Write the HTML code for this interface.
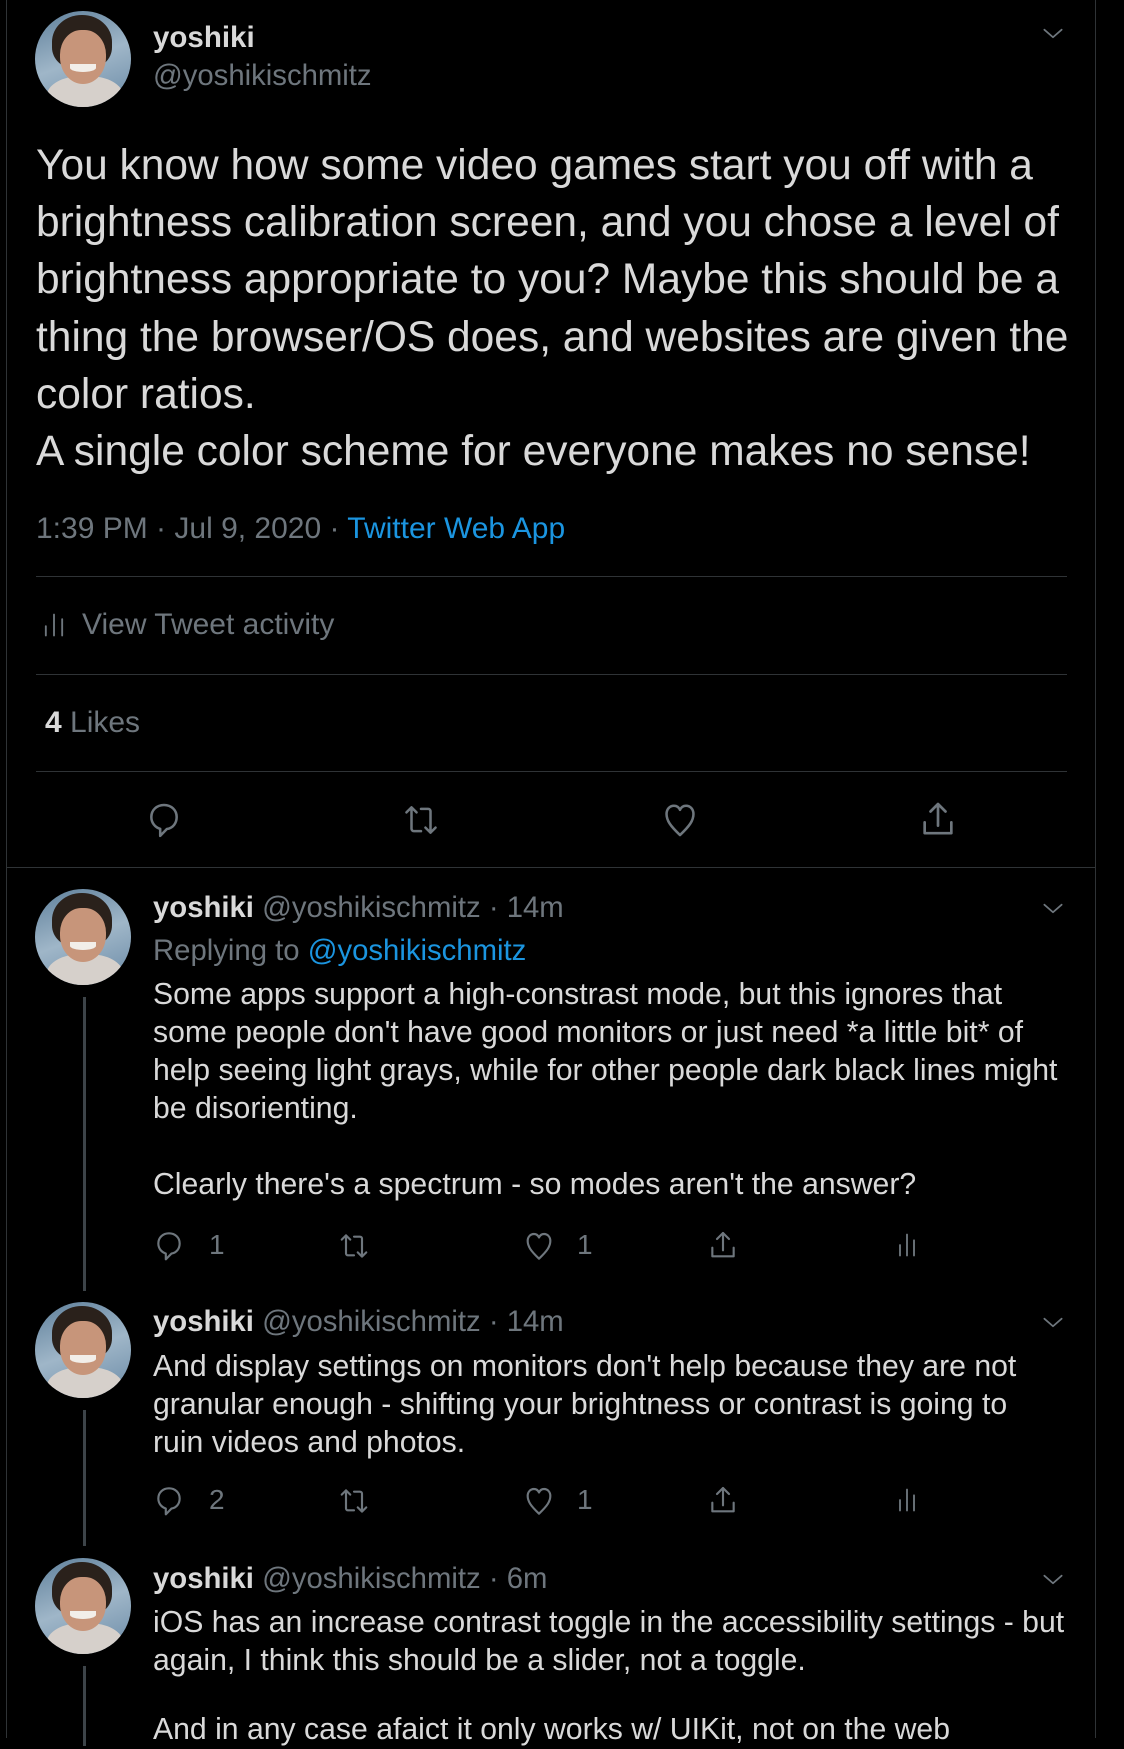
<!DOCTYPE html>
<html><head><meta charset="utf-8">
<style>
*{margin:0;padding:0;box-sizing:border-box}
body{width:1124px;height:1738px;background:#000;overflow:hidden;position:relative;font-family:"Liberation Sans",Arial,sans-serif;color:#d9d9d9}
.t{position:absolute;white-space:nowrap}
.g{color:#6e767d}
.b{color:#1b95e0}
.n{font-weight:bold;color:#d9d9d9}
.hr{position:absolute;height:1px;background:#2f3336}
.av{position:absolute;border-radius:50%;overflow:hidden;background:linear-gradient(160deg,#5e7f9a,#9fb6c8 50%,#6a8aa6)}
.av i{position:absolute;display:block}
.av .sc{left:12%;top:68%;width:80%;height:45%;background:#d6d0cb;border-radius:45%}
.av .hr2{left:18%;top:4%;width:62%;height:56%;background:#2a211b;border-radius:50% 50% 40% 40%}
.av .fc{left:26%;top:20%;width:48%;height:56%;background:#c7957a;border-radius:46% 46% 50% 50%}
.av .sm{left:36%;top:55%;width:28%;height:9%;background:#f2eee9;border-radius:0 0 50% 50%}
.line{position:absolute;left:83px;width:3px;background:#3d4449}
svg{position:absolute;fill:none;stroke:#6e767d;stroke-width:1.6;stroke-linecap:round;stroke-linejoin:round}
</style></head><body>
<svg width="0" height="0" style="position:absolute">
<defs>
<symbol id="rp" viewBox="0 0 24 24"><path d="M12 2.5c-4.6 0-8 3.2-8 7.6 0 3.6 2.3 6.6 5.6 7.5V22l4.2-4.3c4-.6 6.2-3.9 6.2-7.6 0-4.4-3.4-7.6-8-7.6z"/></symbol>
<symbol id="rt" viewBox="0 0 24 24"><path d="M6 4v13.5c0 .8.6 1.5 1.5 1.5H12M2.8 7.2L6 4l3.2 3.2M18 20V6.5c0-.8-.6-1.5-1.5-1.5H12M14.8 16.8L18 20l3.2-3.2"/></symbol>
<symbol id="ht" viewBox="0 0 24 24"><path d="M12 21.5C6 15.8 3.5 12.4 3.5 8.2 3.5 5.1 5.6 3 8.2 3c1.8 0 3.1 1 3.8 2.6C12.7 4 14 3 15.8 3c2.6 0 4.7 2.1 4.7 5.2 0 4.2-2.5 7.6-8.5 13.3z"/></symbol>
<symbol id="sh" viewBox="0 0 24 24"><path d="M12 3v13M7.5 7.5L12 3l4.5 4.5M4 14v6.5h16V14"/></symbol>
<symbol id="br" viewBox="0 0 24 24"><path d="M6 12v9M12 3v18M18 8v13"/></symbol>
<symbol id="cv" viewBox="0 0 24 24"><path d="M4 8l8 7 8-7"/></symbol>
</defs></svg>

<div style="position:absolute;left:6px;top:0;width:1px;height:1738px;background:#2f3336"></div>
<div style="position:absolute;left:1095px;top:0;width:1px;height:1738px;background:#2f3336"></div>

<!-- main tweet -->
<div class="av" style="left:35px;top:11px;width:96px;height:96px"><i class="sc"></i><i class="hr2"></i><i class="fc"></i><i class="sm"></i></div>
<div class="t n" style="left:153px;top:21px;font-size:29.5px;line-height:34px">yoshiki</div>
<div class="t g" style="left:153px;top:59px;font-size:29.3px;line-height:34px">@yoshikischmitz</div>
<svg style="left:1040px;top:21px" width="26" height="26"><use href="#cv"/></svg>

<div style="position:absolute;left:36px;top:137px;font-size:42.5px;line-height:57.2px;color:#d9d9d9;white-space:nowrap">
<div>You know how some video games start you off with a</div>
<div>brightness calibration screen, and you chose a level of</div>
<div>brightness appropriate to you? Maybe this should be a</div>
<div>thing the browser/OS does, and websites are given the</div>
<div>color ratios.</div>
<div>A single color scheme for everyone makes no sense!</div>
</div>
<div class="t g" style="left:36px;top:511px;font-size:30px;line-height:36px">1:39 PM · Jul 9, 2020 · <span class="b">Twitter Web App</span></div>
<div class="hr" style="left:36px;top:576px;width:1031px"></div>
<svg style="left:40px;top:610px" width="28" height="30" viewBox="0 0 24 24"><path d="M5 13v8M12 3v18M19 7v14"/></svg>
<div class="t g" style="left:82px;top:607px;font-size:30px;line-height:36px">View Tweet activity</div>
<div class="hr" style="left:36px;top:674px;width:1031px"></div>
<div class="t g" style="left:45px;top:705px;font-size:30px;line-height:36px"><b style="color:#d9d9d9">4</b> Likes</div>
<div class="hr" style="left:36px;top:771px;width:1031px"></div>
<svg style="left:145px;top:801px" width="38" height="38"><use href="#rp"/></svg>
<svg style="left:402px;top:801px" width="38" height="38"><use href="#rt"/></svg>
<svg style="left:660px;top:801px" width="40" height="38"><use href="#ht"/></svg>
<svg style="left:918px;top:799px" width="40" height="40"><use href="#sh"/></svg>
<div class="hr" style="left:7px;top:867px;width:1089px"></div>

<!-- reply 1 -->
<div class="av" style="left:35px;top:889px;width:96px;height:96px"><i class="sc"></i><i class="hr2"></i><i class="fc"></i><i class="sm"></i></div>
<div class="t" style="left:153px;top:891px;font-size:29.3px;line-height:34px"><b>yoshiki</b> <span class="g">@yoshikischmitz · 14m</span></div>
<svg style="left:1040px;top:896px" width="26" height="26"><use href="#cv"/></svg>
<div class="t g" style="left:153px;top:934px;font-size:29.3px;line-height:34px">Replying to <span class="b">@yoshikischmitz</span></div>
<div style="position:absolute;left:153px;top:976px;font-size:30.2px;line-height:38px;white-space:nowrap">
<div>Some apps support a high-constrast mode, but this ignores that</div>
<div>some people don't have good monitors or just need *a little bit* of</div>
<div>help seeing light grays, while for other people dark black lines might</div>
<div>be disorienting.</div>
<div>&nbsp;</div>
<div>Clearly there's a spectrum - so modes aren't the answer?</div>
</div>
<div class="line" style="top:997px;height:294px"></div>
<svg style="left:153px;top:1230px" width="32" height="32"><use href="#rp"/></svg>
<div class="t g" style="left:209px;top:1229px;font-size:28px;line-height:32px">1</div>
<svg style="left:337px;top:1230px" width="34" height="32"><use href="#rt"/></svg>
<svg style="left:522px;top:1230px" width="34" height="32"><use href="#ht"/></svg>
<div class="t g" style="left:577px;top:1229px;font-size:28px;line-height:32px">1</div>
<svg style="left:707px;top:1228px" width="32" height="34"><use href="#sh"/></svg>
<svg style="left:893px;top:1228px" width="28" height="34"><use href="#br"/></svg>

<!-- reply 2 -->
<div class="av" style="left:35px;top:1302px;width:96px;height:96px"><i class="sc"></i><i class="hr2"></i><i class="fc"></i><i class="sm"></i></div>
<div class="t" style="left:153px;top:1305px;font-size:29.3px;line-height:34px"><b>yoshiki</b> <span class="g">@yoshikischmitz · 14m</span></div>
<svg style="left:1040px;top:1310px" width="26" height="26"><use href="#cv"/></svg>
<div style="position:absolute;left:153px;top:1348px;font-size:30.2px;line-height:38px;white-space:nowrap">
<div>And display settings on monitors don't help because they are not</div>
<div>granular enough - shifting your brightness or contrast is going to</div>
<div>ruin videos and photos.</div>
</div>
<div class="line" style="top:1410px;height:136px"></div>
<svg style="left:153px;top:1485px" width="32" height="32"><use href="#rp"/></svg>
<div class="t g" style="left:209px;top:1484px;font-size:28px;line-height:32px">2</div>
<svg style="left:337px;top:1485px" width="34" height="32"><use href="#rt"/></svg>
<svg style="left:522px;top:1485px" width="34" height="32"><use href="#ht"/></svg>
<div class="t g" style="left:577px;top:1484px;font-size:28px;line-height:32px">1</div>
<svg style="left:707px;top:1483px" width="32" height="34"><use href="#sh"/></svg>
<svg style="left:893px;top:1483px" width="28" height="34"><use href="#br"/></svg>

<!-- reply 3 -->
<div class="av" style="left:35px;top:1558px;width:96px;height:96px"><i class="sc"></i><i class="hr2"></i><i class="fc"></i><i class="sm"></i></div>
<div class="t" style="left:153px;top:1562px;font-size:29.3px;line-height:34px"><b>yoshiki</b> <span class="g">@yoshikischmitz · 6m</span></div>
<svg style="left:1040px;top:1567px" width="26" height="26"><use href="#cv"/></svg>
<div style="position:absolute;left:153px;top:1604px;font-size:30.2px;line-height:38px;white-space:nowrap">
<div>iOS has an increase contrast toggle in the accessibility settings - but</div>
<div>again, I think this should be a slider, not a toggle.</div>
<div style="height:31px"></div>
<div>And in any case afaict it only works w/ UIKit, not on the web</div>
</div>
<div class="line" style="top:1666px;height:80px"></div>
</body></html>
